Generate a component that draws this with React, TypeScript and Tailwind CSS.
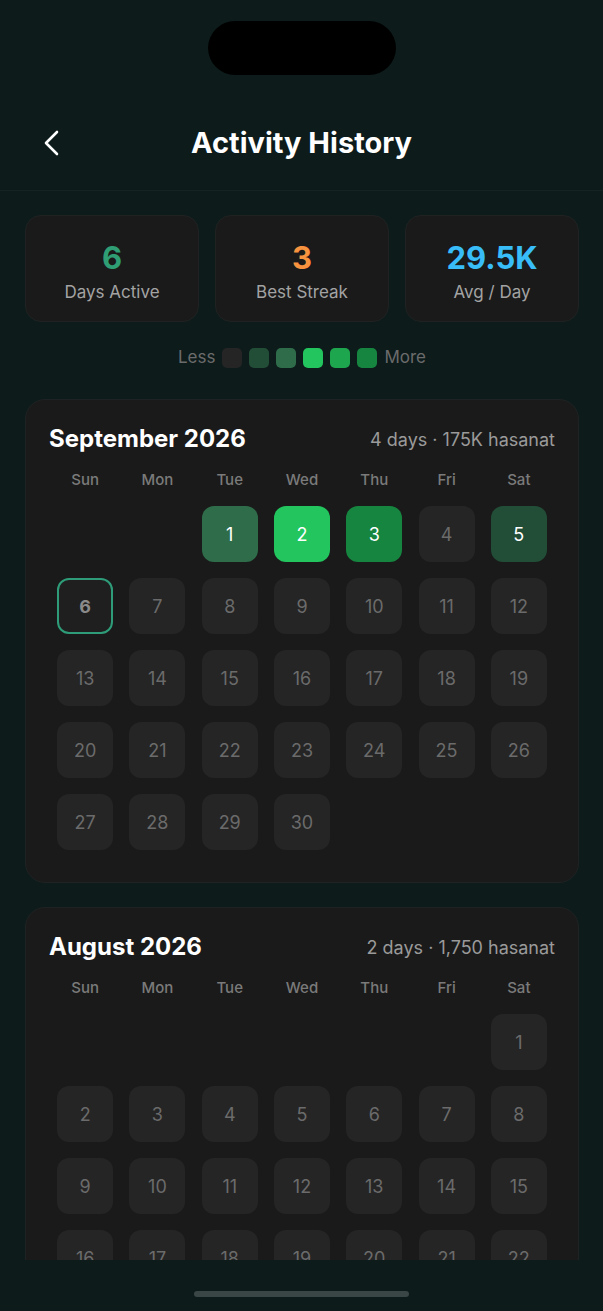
import React from "react";

type Day = { n: number; level?: number; today?: boolean };

const levelClass: Record<number, string> = {
  0: "bg-[#252525] text-[#6b6b6b]",
  1: "bg-[#224d37] text-white",
  2: "bg-[#2e6c4a] text-white",
  3: "bg-[#22c55e] text-white",
  4: "bg-[#1ea64f] text-white",
  5: "bg-[#168540] text-white",
};

const weekdays = ["Sun", "Mon", "Tue", "Wed", "Thu", "Fri", "Sat"];

function buildMonth(offset: number, total: number, active: Record<number, number>, today?: number) {
  const cells: (Day | null)[] = [];
  for (let i = 0; i < offset; i++) cells.push(null);
  for (let d = 1; d <= total; d++) cells.push({ n: d, level: active[d] ?? 0, today: d === today });
  return cells;
}

const months = [
  {
    title: "September 2026",
    summary: "4 days · 175K hasanat",
    cells: buildMonth(2, 30, { 1: 2, 2: 3, 3: 5, 5: 1 }, 6),
  },
  {
    title: "August 2026",
    summary: "2 days · 1,750 hasanat",
    cells: buildMonth(6, 31, {}),
  },
];

function StatCard({ value, label, color }: { value: string; label: string; color: string }) {
  return (
    <div className="h-[107px] rounded-2xl bg-[#1a1a1a] border border-[#202222] flex flex-col items-center pt-6 gap-[5px]">
      <span className={`text-[31px] leading-[36px] font-bold ${color}`}>{value}</span>
      <span className="text-[17px] leading-[22px] text-[#a3a3a3]">{label}</span>
    </div>
  );
}

function MonthCard({ title, summary, cells }: { title: string; summary: string; cells: (Day | null)[] }) {
  return (
    <div className="rounded-[20px] bg-[#1a1a1a] border border-[#1f2222] px-[23px] pt-6 pb-8">
      <div className="flex items-center justify-between h-[30px]">
        <h2 className="text-[24px] leading-[30px] font-bold text-white">{title}</h2>
        <span className="text-[18px] text-[#9a9a9a]">{summary}</span>
      </div>
      <div className="grid grid-cols-7 mt-4">
        {weekdays.map((w) => (
          <div key={w} className="text-center text-[15px] leading-5 font-medium text-[#7a7a7a]">
            {w}
          </div>
        ))}
      </div>
      <div className="grid grid-cols-7 gap-y-4 mt-4">
        {cells.map((c, i) => (
          <div key={i} className="flex justify-center">
            {c ? (
              c.today ? (
                <div className="w-14 h-14 rounded-xl border-2 border-[#2e9c78] bg-[#1f1f1f] flex items-center justify-center text-[18px] font-bold text-[#8a8a8a]">
                  {c.n}
                </div>
              ) : (
                <div className={`w-14 h-14 rounded-xl flex items-center justify-center text-[18px] ${levelClass[c.level ?? 0]}`}>
                  {c.n}
                </div>
              )
            ) : (
              <div className="w-14 h-14" />
            )}
          </div>
        ))}
      </div>
    </div>
  );
}

export default function App() {
  return (
    <div
      className="w-full h-[1311px] bg-[#0d1b1b] flex flex-col overflow-hidden"
      style={{ fontFamily: "Inter, 'Noto Sans', sans-serif" }}
    >
      {/* Status area */}
      <div className="h-[95px] shrink-0 flex justify-center pt-[21px]">
        <div className="w-[188px] h-[54px] rounded-full bg-black" />
      </div>

      {/* Header */}
      <div className="h-[96px] shrink-0 grid grid-cols-[1fr_auto_1fr] items-center border-b border-[#172323]">
        <div className="pl-[43px]">
          <svg width="16" height="26" viewBox="0 0 16 26" fill="none">
            <path d="M14 2 L3 13 L14 24" stroke="white" strokeWidth="2.6" strokeLinecap="round" strokeLinejoin="round" />
          </svg>
        </div>
        <h1 className="text-[29px] leading-9 font-bold text-white">Activity History</h1>
        <div />
      </div>

      {/* Content */}
      <div className="flex-1 overflow-hidden pl-[25px] pr-[24px] pt-6">
        <div className="grid grid-cols-3 gap-4">
          <StatCard value="6" label="Days Active" color="text-[#2f9e74]" />
          <StatCard value="3" label="Best Streak" color="text-[#f7923f]" />
          <StatCard value="29.5K" label="Avg / Day" color="text-[#38bdf8]" />
        </div>

        <div className="flex items-center justify-center gap-[7px] mt-[26px] h-5">
          <span className="text-[17px] text-[#6b6b6b]">Less</span>
          <div className="w-5 h-5 rounded-[5px] bg-[#252525]" />
          <div className="w-5 h-5 rounded-[5px] bg-[#224d37]" />
          <div className="w-5 h-5 rounded-[5px] bg-[#2e6c4a]" />
          <div className="w-5 h-5 rounded-[5px] bg-[#22c55e]" />
          <div className="w-5 h-5 rounded-[5px] bg-[#1ea64f]" />
          <div className="w-5 h-5 rounded-[5px] bg-[#168540]" />
          <span className="text-[17px] text-[#6b6b6b]">More</span>
        </div>

        <div className="flex flex-col gap-6 mt-[31px]">
          {months.map((m) => (
            <MonthCard key={m.title} {...m} />
          ))}
        </div>
      </div>

      {/* Home indicator */}
      <div className="h-[51px] shrink-0 bg-[#0d1b1b] flex justify-center pt-[31px]">
        <div className="w-[215px] h-[6px] rounded-full bg-[#3a4646]" />
      </div>
    </div>
  );
}
